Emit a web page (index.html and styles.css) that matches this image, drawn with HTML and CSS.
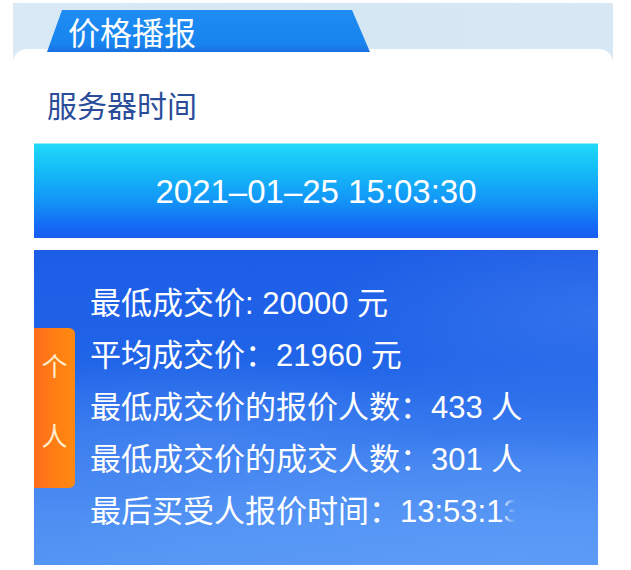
FILE: index.html
```html
<!DOCTYPE html>
<html lang="zh-CN">
<head>
<meta charset="utf-8">
<title>价格播报</title>
<link rel="stylesheet" href="styles.css">
</head>
<body>
<div class="page">
  <div class="band">
    <div class="tab"><span class="tab-text">价格播报</span></div>
  </div>
  <div class="card">
    <div class="label">服务器时间</div>
    <div class="timebar">2021–01–25 15:03:30</div>
    <div class="panel">
      <div class="side">
        <span>个</span>
        <span>人</span>
      </div>
      <div class="lines">
        <div class="line">最低成交价: 20000 元</div>
        <div class="line">平均成交价：21960 元</div>
        <div class="line">最低成交价的报价人数：433 人</div>
        <div class="line">最低成交价的成交人数：301 人</div>
        <div class="line">最后买受人报价时间：13:53:1<span class="fade">3</span></div>
      </div>
    </div>
  </div>
</div>
</body>
</html>
```
FILE: styles.css
```css
* { box-sizing: border-box; }
html, body { margin: 0; padding: 0; background: #ffffff; }
body {
  font-family: "Liberation Sans", "Noto Sans CJK SC", sans-serif;
  width: 631px;
  height: 570px;
  overflow: hidden;
}
.page {
  padding-top: 3px;
}
.band {
  margin-left: 13px;
  width: 600px;
  height: 62px;
  background: linear-gradient(90deg, #d9e9f5 0%, #d6e7f4 60%, #d8e8f4 100%);
  padding: 7px 0 0 34px;
}
.tab {
  position: relative;
  z-index: 2;
  width: 323px;
  height: 42px;
  background: linear-gradient(180deg, #1e8cf2 0%, #1884ef 80%, #1a6fe0 100%);
  clip-path: polygon(15px 0, 305px 0, 323px 100%, 0 100%);
  padding-left: 21px;
  display: flex;
  align-items: center;
}
.tab-text {
  color: #ffffff;
  font-family: "Noto Sans CJK SC", sans-serif;
  font-size: 32px;
  line-height: 1;
  font-weight: 400;
}
.card {
  position: relative;
  margin-top: -16px;
  margin-left: 13px;
  width: 600px;
  background: #ffffff;
  border-radius: 14px 14px 0 0;
  padding: 37px 15px 0 21px;
}
.label {
  font-family: "Noto Sans CJK SC", sans-serif;
  font-size: 30px;
  font-weight: 400;
  line-height: 36px;
  color: #2a4d9a;
  padding-left: 13px;
  height: 57px;
}
.timebar {
  height: 95px;
  background: linear-gradient(180deg, #20dbf9 0%, #16c0f8 25%, #1296f7 60%, #1566f4 90%, #1a5ef0 100%);
  color: #ffffff;
  font-family: "Liberation Sans", sans-serif;
  font-size: 33px;
  display: flex;
  align-items: center;
  justify-content: center;
  padding-top: 2px;
  box-shadow: inset 0 1px 0 rgba(255,255,255,0.5);
}
.panel {
  position: relative;
  margin-top: 12px;
  height: 315px;
  background:
    radial-gradient(ellipse 60% 40% at 30% 62%, rgba(80,140,245,0.35) 0%, rgba(80,140,245,0) 70%),
    radial-gradient(ellipse 110% 55% at 85% 100%, rgba(100,160,250,0.55) 0%, rgba(100,160,250,0.25) 55%, rgba(100,160,250,0) 75%),
    radial-gradient(ellipse 70% 45% at 100% 20%, rgba(70,130,240,0.5) 0%, rgba(70,130,240,0) 70%),
    linear-gradient(180deg, #1c5de6 0%, #2064e8 35%, #3a7cee 60%, #4d8ff2 85%, #5496f3 100%);
  padding: 28px 0 0 56px;
  overflow: hidden;
}
.side {
  position: absolute;
  left: 0;
  top: 78px;
  width: 41px;
  height: 160px;
  background: linear-gradient(90deg, #ff6d1c 0%, #ff7d14 50%, #ff8a10 100%);
  border-radius: 0 6px 6px 0;
  display: flex;
  flex-direction: column;
  align-items: center;
  gap: 44px;
  padding-top: 24px;
  color: #ffeccc;
  font-family: "Noto Sans CJK SC", sans-serif;
  font-size: 26px;
  line-height: 26px;
}
.lines {
  display: flex;
  flex-direction: column;
}
.line {
  color: #ffffff;
  font-size: 31px;
  line-height: 52px;
  white-space: nowrap;
}
.fade {
  background: linear-gradient(90deg, rgba(255,255,255,0.85) 0%, rgba(255,255,255,0.3) 45%, rgba(255,255,255,0) 70%);
  -webkit-background-clip: text;
  background-clip: text;
  color: transparent;
}
```
